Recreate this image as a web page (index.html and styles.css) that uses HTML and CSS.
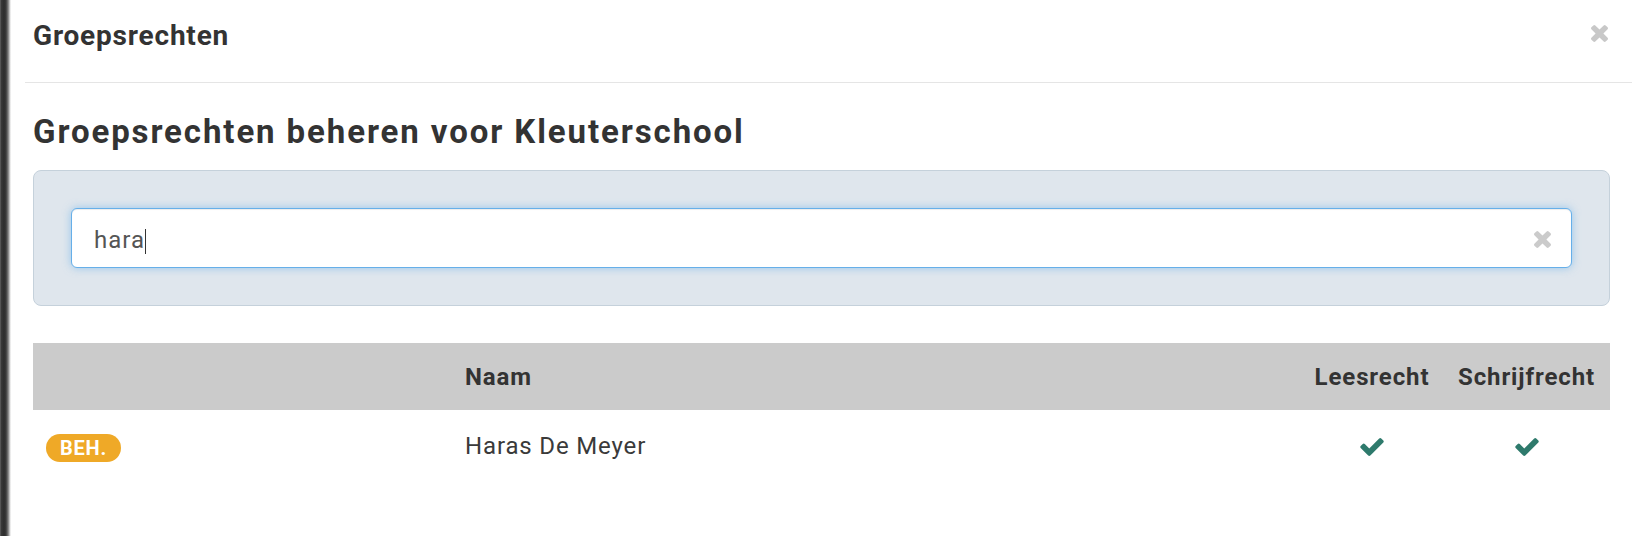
FILE: index.html
```html
<!DOCTYPE html>
<html lang="nl">
<head>
<meta charset="utf-8">
<title>Groepsrechten</title>
<link rel="stylesheet" href="styles.css">
</head>
<body>
<div class="modal">
  <div class="modal-header">
    <h4 class="modal-title">Groepsrechten</h4>
    <button class="close" type="button" aria-label="Sluiten">
      <svg viewBox="110 366 1188 1188" width="17" height="17"><path d="M1298 1322q0 40-28 68l-136 136q-28 28-68 28t-68-28l-294-294-294 294q-28 28-68 28t-68-28l-136-136q-28-28-28-68t28-68l294-294-294-294q-28-28-28-68t28-68l136-136q28-28 68-28t68 28l294 294 294-294q28-28 68-28t68 28l136 136q28 28 28 68t-28 68l-294 294 294 294q28 28 28 68z" fill="currentColor"/></svg>
    </button>
  </div>
  <div class="modal-body">
    <h3 class="page-title">Groepsrechten beheren voor Kleuterschool</h3>
    <div class="filter-panel">
      <div class="search-input" role="textbox">
        <span class="search-value">hara</span><span class="caret"></span>
        <span class="clear">
          <svg viewBox="110 366 1188 1188" width="17" height="17"><path d="M1298 1322q0 40-28 68l-136 136q-28 28-68 28t-68-28l-294-294-294 294q-28 28-68 28t-68-28l-136-136q-28-28-28-68t28-68l294-294-294-294q-28-28-28-68t28-68l136-136q28-28 68-28t68 28l294 294 294-294q28-28 68-28t68 28l136 136q28 28 28 68t-28 68l-294 294 294 294q28 28 28 68z" fill="currentColor"/></svg>
        </span>
      </div>
    </div>
    <table class="rights-table">
      <colgroup>
        <col class="col-badge">
        <col class="col-name">
        <col class="col-read">
        <col class="col-write">
      </colgroup>
      <thead>
        <tr>
          <th></th>
          <th class="th-name">Naam</th>
          <th class="th-center">Leesrecht</th>
          <th class="th-center">Schrijfrecht</th>
        </tr>
      </thead>
      <tbody>
        <tr>
          <td><span class="badge">BEH.</span></td>
          <td class="name">Haras De Meyer</td>
          <td class="check-cell"><svg class="check" viewBox="121 334 1550 1188" width="24" height="18"><path d="M1671 566q0 40-28 68l-724 724-136 136q-28 28-68 28t-68-28l-136-136-362-362q-28-28-28-68t28-68l136-136q28-28 68-28t68 28l294 295 656-657q28-28 68-28t68 28l136 136q28 28 28 68z" fill="currentColor"/></svg></td>
          <td class="check-cell"><svg class="check" viewBox="121 334 1550 1188" width="24" height="18"><path d="M1671 566q0 40-28 68l-724 724-136 136q-28 28-68 28t-68-28l-136-136-362-362q-28-28-28-68t28-68l136-136q28-28 68-28t68 28l294 295 656-657q28-28 68-28t68 28l136 136q28 28 28 68z" fill="currentColor"/></svg></td>
        </tr>
      </tbody>
    </table>
  </div>
</div>
</body>
</html>
```

FILE: styles.css
```css
* { box-sizing: border-box; }

html, body {
  margin: 0;
  padding: 0;
  height: 100%;
}

body {
  font-family: Roboto, "Liberation Sans", sans-serif;
  color: #333;
  background-color: #fff;
  background-image: linear-gradient(to right, #6e6e6e 0px, #3a3a3a 1px, #2c2c2c 4px, #3a3a3a 6px, #777 8px, #d8d8d8 10px, #fff 11px);
  background-size: 12px 100%;
  background-repeat: no-repeat;
}

.modal {
  width: 1632px;
}

.modal-header {
  height: 83px;
  margin-left: 25px;
  padding: 22px 24px 0 8px;
  border-bottom: 1px solid #e5e5e5;
  display: flex;
  justify-content: space-between;
  align-items: flex-start;
}

.modal-title {
  margin: 0;
  font-size: 28px;
  line-height: 28px;
  font-weight: 700;
  color: #333;
  letter-spacing: 0.8px;
}

.close {
  margin-top: 2px;
  padding: 0;
  border: 0;
  background: none;
  color: #c8c8c8;
  width: 17px;
  height: 18px;
  display: flex;
  align-items: center;
  justify-content: center;
  cursor: pointer;
}

.modal-body {
  padding: 0 22px 0 33px;
}

.page-title {
  margin: 31px 0 20px;
  font-size: 33px;
  line-height: 36px;
  font-weight: 700;
  color: #333;
  letter-spacing: 1.9px;
}

.filter-panel {
  background: #dfe6ed;
  border: 1px solid #c5d1db;
  border-radius: 8px;
  padding: 37px;
}

.search-input {
  height: 60px;
  background: #fff;
  border: 1px solid #66afe9;
  border-radius: 6px;
  box-shadow: inset 0 1px 1px rgba(0, 0, 0, 0.075), 0 0 8px rgba(102, 175, 233, 0.6);
  padding: 0 20px 0 22px;
  display: flex;
  align-items: center;
  font-size: 24px;
  color: #555;
}

.search-value {
  padding-top: 4px;
  line-height: 28px;
  letter-spacing: 1px;
}

.caret {
  width: 1px;
  height: 25px;
  background: #333;
  margin-top: 6px;
}

.clear {
  margin-left: auto;
  color: #cbcbcb;
  display: flex;
  margin-top: 2px;
}

.rights-table {
  margin-top: 37px;
  width: 1577px;
  border-collapse: collapse;
  table-layout: fixed;
}

.col-badge { width: 419px; }
.col-read { width: 142px; }
.col-write { width: 167px; }

.rights-table th {
  height: 67px;
  background: #cbcbcb;
  padding: 0 13px;
  font-size: 24px;
  font-weight: 700;
  color: #333;
  text-align: left;
  letter-spacing: 0.9px;
  white-space: nowrap;
}

.rights-table th.th-center {
  text-align: center;
  padding: 0;
}

.rights-table td {
  height: 72px;
  padding: 0 13px;
  vertical-align: middle;
}

.badge {
  display: inline-flex;
  align-items: center;
  height: 28px;
  padding: 0 14px;
  border-radius: 14px;
  background: #efa927;
  color: #fff;
  font-size: 20px;
  font-weight: 700;
  letter-spacing: 0.8px;
  margin-top: 4px;
}

.name {
  font-size: 24px;
  color: #3a3a3a;
  letter-spacing: 0.85px;
}

.check-cell {
  text-align: center;
}

.check {
  display: inline-block;
  vertical-align: middle;
  color: #2e7a6c;
}
```
